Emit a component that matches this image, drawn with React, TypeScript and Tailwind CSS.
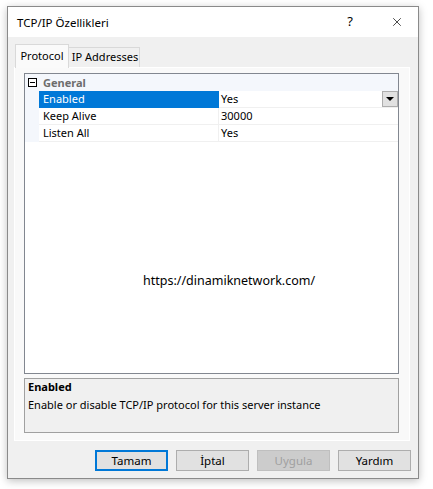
import { X } from "lucide-react"

const rows = [
  { name: "Enabled", value: "Yes", selected: true },
  { name: "Keep Alive", value: "30000", selected: false },
  { name: "Listen All", value: "Yes", selected: false },
]

const buttons = [
  { label: "Tamam", primary: true },
  { label: "İptal" },
  { label: "Uygula", disabled: true },
  { label: "Yardım" },
]

function DialogButton({ label, primary, disabled }: { label: string; primary?: boolean; disabled?: boolean }) {
  const tone = primary
    ? "border-2 border-[#0078d7] bg-[#e1e1e1] text-black"
    : disabled
      ? "border border-[#bfbfbf] bg-[#cccccc] text-[#a0a0a0]"
      : "border border-[#adadad] bg-[#e1e1e1] text-black"
  return (
    <div className={`w-[73px] h-[21px] flex items-center justify-center text-[11.5px] leading-none ${tone}`}>
      {label}
    </div>
  )
}

export default function App() {
  return (
    <div className="w-[433px] h-[489px] bg-white pt-[6px] pl-[7px]" style={{ fontFamily: '"Noto Sans", "Open Sans", sans-serif' }}>
      <div className="w-[412px] h-[473px] border border-[#8a8a8a] bg-[#f0f0f0] flex flex-col shadow-[0_2px_8px_rgba(0,0,0,0.25)]">
        {/* title bar */}
        <div className="h-[30px] bg-white flex items-center pl-[9px] pr-[14px] text-[11.5px] text-black">
          <span className="flex-1 pt-[1px]">TCP/IP Özellikleri</span>
          <span className="w-[10px] text-center text-[13px] mr-[35px]">?</span>
          <X className="w-[14px] h-[14px]" strokeWidth={1.2} />
        </div>

        {/* tabs */}
        <div className="flex items-end pl-[7px] pt-[6px] h-[30px] relative z-10 text-[11px] whitespace-nowrap">
          <div className="h-[24px] w-[54px] border border-b-0 border-[#d9d9d9] bg-[#fafafa] flex items-start justify-center pt-[3px] -mb-[1px]">
            Protocol
          </div>
          <div className="h-[20px] w-[71px] border border-b-0 border-l-0 border-[#d9d9d9] bg-[#f0f0f0] flex items-center justify-center pl-[2px]">
            IP Addresses
          </div>
        </div>

        {/* tab panel */}
        <div className="ml-[6px] w-[396px] h-[374px] border border-white bg-[#f9f9f9] pt-[5px] pl-[9px] flex flex-col">
          <div className="w-[375px] h-[301px] border border-[#828790] bg-white relative flex flex-col text-[11px]">
            <div className="h-[17px] flex bg-[#f4f7fc]">
              <div className="w-[14px] flex items-center justify-center">
                <div className="w-[9px] h-[9px] border border-black flex items-center justify-center bg-white">
                  <div className="w-[5px] h-[1px] bg-black" />
                </div>
              </div>
              <span className="pl-[4px] font-bold text-[#6d6d6d] leading-[17px]">General</span>
            </div>
            {rows.map((r) => (
              <div key={r.name} className="h-[17px] flex">
                <div className="w-[14px] bg-[#f4f7fc]" />
                <div
                  className={`w-[180px] pl-[4px] leading-[16px] border-b border-r ${
                    r.selected ? "bg-[#0078d7] text-white border-[#0078d7]" : "text-black border-[#f0f0f0]"
                  }`}
                >
                  {r.name}
                </div>
                <div className="flex-1 flex items-center pl-[2px] border-b border-[#f0f0f0] leading-[16px]">
                  <span className="flex-1">{r.value}</span>
                  {r.selected && (
                    <div className="w-[16px] h-[16px] border border-[#adadad] bg-[#e1e1e1] flex items-center justify-center">
                      <div className="w-0 h-0 border-l-[4px] border-r-[4px] border-t-[4px] border-l-transparent border-r-transparent border-t-black" />
                    </div>
                  )}
                </div>
              </div>
            ))}
            <div className="absolute left-[118px] top-[198px] text-[12.5px] text-black">
              https://dinamiknetwork.com/
            </div>
          </div>

          <div className="mt-[4px] w-[375px] h-[55px] border border-[#a0a0a0] bg-[#f0f0f0] pl-[3px] text-[11px] text-black">
            <div className="font-bold leading-[16px]">Enabled</div>
            <div className="leading-[17px] mt-[1px]">Enable or disable TCP/IP protocol for this server instance</div>
          </div>
        </div>

        {/* buttons */}
        <div className="flex justify-end gap-[8px] pr-[7px] mt-[9px]">
          {buttons.map((b) => (
            <DialogButton key={b.label} {...b} />
          ))}
        </div>
      </div>
    </div>
  )
}
